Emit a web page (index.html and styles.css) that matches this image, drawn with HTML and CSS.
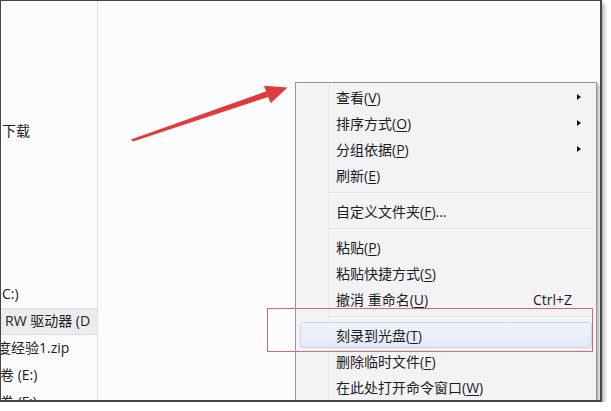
FILE: index.html
```html
<!DOCTYPE html>
<html lang="zh-CN">
<head>
<meta charset="utf-8">
<title>右键菜单</title>
<link rel="stylesheet" href="styles.css">
</head>
<body>
<div class="window">
  <div class="nav">
    <div class="nav-row first">下载</div>
    <div class="nav-row gap">C:)</div>
    <div class="nav-row sel"><span class="ind">RW 驱动器 (D</span></div>
    <div class="nav-row"><span class="cut4">度经验1.zip</span></div>
    <div class="nav-row"><span class="cut2">卷 (E:)</span></div>
    <div class="nav-row"><span class="cut2">卷 (F:)</span></div>
  </div>
  <div class="content"></div>

  <svg class="arrow" width="611" height="411" viewBox="0 0 611 411" aria-hidden="true">
    <polygon points="131,139.5 133,141.5 268.2,96.9 270.6,103.3 287.5,87.5 264,85.8 266.2,91.3" fill="#e23a3a"/>
  </svg>

  <div class="menu">
    <div class="item">查看(<u>V</u>)<span class="sub"></span></div>
    <div class="item">排序方式(<u>O</u>)<span class="sub"></span></div>
    <div class="item">分组依据(<u>P</u>)<span class="sub"></span></div>
    <div class="item">刷新(<u>E</u>)</div>
    <div class="sep"></div>
    <div class="item">自定义文件夹(<u>F</u>)...</div>
    <div class="sep"></div>
    <div class="item">粘贴(<u>P</u>)</div>
    <div class="item">粘贴快捷方式(<u>S</u>)</div>
    <div class="item">撤消 重命名(<u>U</u>)<span class="key">Ctrl+Z</span></div>
    <div class="sep"></div>
    <div class="item hl">刻录到光盘(<u>T</u>)</div>
    <div class="item">删除临时文件(<u>F</u>)</div>
    <div class="item">在此处打开命令窗口(<u>W</u>)</div>
  </div>

  <div class="mark"></div>
</div>
</body>
</html>
```

FILE: styles.css
```css
html, body {
  margin: 0;
  padding: 0;
  background: #ffffff;
}

body {
  font-family: "Open Sans", "Noto Sans CJK SC", sans-serif;
  font-size: 14px;
  color: #1c1c1c;
}

.window {
  position: relative;
  width: 599px;
  height: 399px;
  border-style: solid;
  border-color: #454545;
  border-width: 1px 2px 2px 1px;
  background: #fcfbfd;
  box-shadow: 2px 3px 4px rgba(0, 0, 0, 0.35);
  display: flex;
  overflow: hidden;
}

.nav {
  width: 96px;
  flex: none;
  border-right: 1px solid #dedde0;
  padding-top: 117px;
  overflow: hidden;
  white-space: nowrap;
}

.nav-row {
  height: 27px;
  line-height: 26px;
  box-sizing: border-box;
  padding-left: 1px;
  color: #222;
}

.nav-row.gap {
  margin-top: 136px;
}

.nav-row.sel {
  background: #ececee;
  border-top: 1px solid #dcdcde;
  border-bottom: 1px solid #dcdcde;
  line-height: 24px;
}

.ind {
  padding-left: 3px;
}

.cut4 {
  margin-left: -5px;
}

.cut2 {
  margin-left: -2px;
}

.content {
  flex: 1;
}

.arrow {
  position: absolute;
  left: -1px;
  top: -1px;
  pointer-events: none;
}

.menu {
  position: absolute;
  left: 294px;
  top: 81px;
  width: 300px;
  height: 340px;
  border: 1px solid #979797;
  background: #f3f2f5;
  padding-top: 1px;
  box-shadow: 2px 2px 3px rgba(0, 0, 0, 0.3);
}

.menu::before {
  content: "";
  position: absolute;
  left: 33px;
  top: 0;
  bottom: 0;
  width: 1px;
  background: #e3e2e5;
  border-right: 1px solid #fbfbfd;
}

.item {
  position: relative;
  height: 26px;
  box-sizing: border-box;
  display: flex;
  align-items: center;
  padding-left: 40px;
  white-space: nowrap;
}

.item u {
  text-decoration-thickness: 1px;
  text-underline-offset: 2px;
}

.item.hl {
  margin: 0 4px;
  padding-left: 35px;
  border: 1px solid #c4d6ee;
  border-radius: 3px;
  background: linear-gradient(#f0f4fa, #e2eaf5);
}

.sub {
  margin-left: auto;
  margin-right: 15px;
  width: 0;
  height: 0;
  border-left: 4px solid #111;
  border-top: 3.5px solid transparent;
  border-bottom: 3.5px solid transparent;
}

.key {
  margin-left: auto;
  margin-right: 24px;
}

.sep {
  position: relative;
  height: 10px;
}

.sep::after {
  content: "";
  position: absolute;
  left: 34px;
  right: 4px;
  top: 4px;
  height: 1px;
  background: #e0dfe2;
  border-bottom: 1px solid #fdfdff;
}

.mark {
  position: absolute;
  left: 266px;
  top: 307px;
  width: 324px;
  height: 42px;
  border: 1px solid #d86a70;
  pointer-events: none;
}
```
